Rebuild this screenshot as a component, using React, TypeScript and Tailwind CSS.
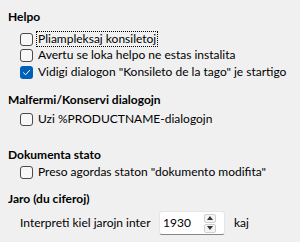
import React from 'react';

const font = { fontFamily: 'Lato, "Liberation Sans", sans-serif' };

const CheckBox = ({ checked }: { checked?: boolean }) =>
  checked ? (
    <span className="flex h-[13px] w-[13px] shrink-0 items-center justify-center rounded-[3px] bg-[#005fb8]">
      <svg width="9" height="9" viewBox="0 0 9 9" fill="none">
        <path d="M1.5 4.8 L3.6 6.8 L7.6 2.4" stroke="#fff" strokeWidth="1" strokeLinecap="round" strokeLinejoin="round" />
      </svg>
    </span>
  ) : (
    <span className="block h-[13px] w-[13px] shrink-0 rounded-[3px] border border-[#4a4a4a] bg-[#f7f7f7]" />
  );

const CheckRow = ({ label, checked, focused, className = '' }: { label: string; checked?: boolean; focused?: boolean; className?: string }) => (
  <div className={`flex h-[16px] items-center whitespace-nowrap pl-[20px] ${className}`}>
    <CheckBox checked={checked} />
    <span className={`ml-[3px] px-[1px] leading-[14px] ${focused ? 'border border-dotted border-black' : 'border border-transparent'}`}>
      {label}
    </span>
  </div>
);

const Heading = ({ children, className = '' }: { children: React.ReactNode; className?: string }) => (
  <div className={`h-[16px] whitespace-nowrap pl-[8px] font-bold leading-[16px] ${className}`}>{children}</div>
);

const SpinBox = ({ value }: { value: string }) => (
  <div className="flex h-[24px] w-[66px] shrink-0 items-center justify-between rounded-[3px] border border-[#e5e5e5] border-b-[#868686] bg-white pl-[3px] pr-[8px]">
    <span>{value}</span>
    <div className="flex flex-col gap-[1px]">
      <span className="flex h-[9px] w-[12px] items-center justify-center rounded-[2px] border border-[#d0d0d0] bg-[#f4f4f4]">
        <svg width="6" height="4" viewBox="0 0 6 4"><path d="M0 4 L3 0 L6 4 Z" fill="#333" /></svg>
      </span>
      <span className="flex h-[9px] w-[12px] items-center justify-center rounded-[2px] border border-[#d0d0d0] bg-[#f4f4f4]">
        <svg width="6" height="4" viewBox="0 0 6 4"><path d="M0 0 L6 0 L3 4 Z" fill="#333" /></svg>
      </span>
    </div>
  </div>
);

export default function App() {
  return (
    <div className="h-[242px] w-[300px] overflow-hidden bg-[#f0f0f0] pt-[9px] text-[12px] leading-[16px] text-black" style={font}>
      <Heading>Helpo</Heading>
      <CheckRow className="mt-[6px]" label="Pliampleksaj konsiletoj" focused />
      <CheckRow label="Avertu se loka helpo ne estas instalita" />
      <CheckRow className="mt-[1px]" label={'Vidigi dialogon "Konsileto de la tago" je startigo'} checked />

      <Heading className="mt-[12px]">Malfermi/Konservi dialogojn</Heading>
      <CheckRow className="mt-[3px]" label="Uzi %PRODUCTNAME-dialogojn" />

      <Heading className="mt-[20px]">Dokumenta stato</Heading>
      <CheckRow className="mt-[1px]" label={'Preso agordas staton "dokumento modifita"'} />

      <Heading className="mt-[11px]">Jaro (du ciferoj)</Heading>
      <div className="mt-[4px] flex items-center whitespace-nowrap pl-[20px]">
        <span className="w-[139px]">Interpreti kiel jarojn inter</span>
        <SpinBox value="1930" />
        <span className="ml-[9px]">kaj</span>
      </div>
    </div>
  );
}
